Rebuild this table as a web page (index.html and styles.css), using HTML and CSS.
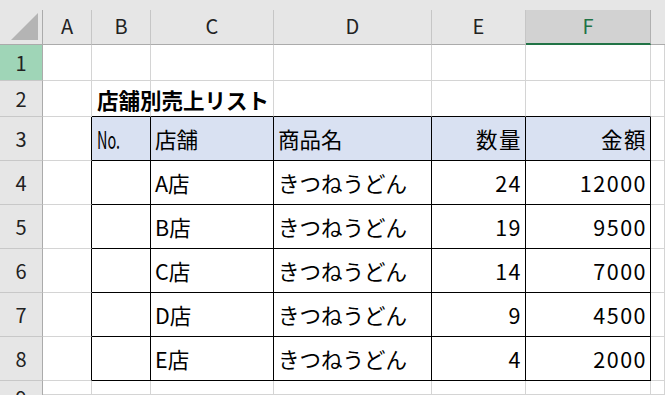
FILE: index.html
```html
<!DOCTYPE html>
<html lang="ja">
<head>
<meta charset="utf-8">
<title>店舗別売上リスト</title>
<link rel="stylesheet" href="styles.css">
</head>
<body>
<div class="sheet">
  <div class="colbar">
    <div class="hcell corner"><svg class="tri" width="28" height="28" viewBox="0 0 28 28"><polygon points="27,0 27,27 0,27" fill="#b4b4b4"/></svg></div>
    <div class="hcell">A</div>
    <div class="hcell">B</div>
    <div class="hcell">C</div>
    <div class="hcell">D</div>
    <div class="hcell">E</div>
    <div class="hcell sel">F</div>
    <div class="hcell last"></div>
  </div>
  <div class="grid">
    <!-- row 1 -->
    <div class="rh rsel">1</div>
    <div class="c"></div><div class="c"></div><div class="c"></div><div class="c"></div><div class="c"></div><div class="c"></div><div class="c"></div>
    <!-- row 2 -->
    <div class="rh">2</div>
    <div class="c"></div>
    <div class="c title tb">店舗別売上リスト</div>
    <div class="c tb"></div><div class="c tb"></div><div class="c tb"></div><div class="c tb"></div>
    <div class="c"></div>
    <!-- row 3 -->
    <div class="rh">3</div>
    <div class="c tl"></div>
    <div class="c t th"><span class="no">No.</span></div>
    <div class="c t th">店舗</div>
    <div class="c t th">商品名</div>
    <div class="c t th num">数量</div>
    <div class="c t th num">金額</div>
    <div class="c"></div>
    <!-- row 4 -->
    <div class="rh">4</div>
    <div class="c tl"></div>
    <div class="c t"></div>
    <div class="c t">A店</div>
    <div class="c t">きつねうどん</div>
    <div class="c t num">24</div>
    <div class="c t num">12000</div>
    <div class="c"></div>
    <!-- row 5 -->
    <div class="rh">5</div>
    <div class="c tl"></div>
    <div class="c t"></div>
    <div class="c t">B店</div>
    <div class="c t">きつねうどん</div>
    <div class="c t num">19</div>
    <div class="c t num">9500</div>
    <div class="c"></div>
    <!-- row 6 -->
    <div class="rh">6</div>
    <div class="c tl"></div>
    <div class="c t"></div>
    <div class="c t">C店</div>
    <div class="c t">きつねうどん</div>
    <div class="c t num">14</div>
    <div class="c t num">7000</div>
    <div class="c"></div>
    <!-- row 7 -->
    <div class="rh">7</div>
    <div class="c tl"></div>
    <div class="c t"></div>
    <div class="c t">D店</div>
    <div class="c t">きつねうどん</div>
    <div class="c t num">9</div>
    <div class="c t num">4500</div>
    <div class="c"></div>
    <!-- row 8 -->
    <div class="rh">8</div>
    <div class="c tl"></div>
    <div class="c t"></div>
    <div class="c t">E店</div>
    <div class="c t">きつねうどん</div>
    <div class="c t num">4</div>
    <div class="c t num">2000</div>
    <div class="c"></div>
    <!-- row 9 -->
    <div class="rh r9"><span class="r9n">9</span></div>
    <div class="c"></div><div class="c"></div><div class="c"></div><div class="c"></div><div class="c"></div><div class="c"></div><div class="c"></div>
  </div>
</div>
</body>
</html>
```

FILE: styles.css
```css
* { box-sizing: border-box; }
html, body { margin: 0; padding: 0; background: #ffffff; }
body {
  width: 665px;
  height: 395px;
  overflow: hidden;
  font-family: "Noto Sans CJK JP", "Noto Sans", sans-serif;
  color: #000;
}
.sheet { width: 665px; height: 395px; overflow: hidden; }

.colbar {
  display: grid;
  grid-template-columns: 43px 49px 59px 123px 158px 94px 125px 14px;
  padding-top: 10px;
  background: #e6e6e6;
  height: 45px;
}
.hcell {
  height: 35px;
  border-right: 1px solid #c6c6c6;
  border-bottom: 1px solid #ababab;
  display: flex;
  align-items: center;
  justify-content: center;
  font-size: 20px;
  color: #222;
  line-height: 1;
  padding-bottom: 2px;
}
.hcell.corner {
  border-right: 1px solid #ababab;
  justify-content: flex-end;
  align-items: flex-end;
  padding: 0 3px 3px 0;
}
.tri { display: block; }
.hcell.sel {
  background: #d2d2d2;
  color: #217346;
  border-right: 1px solid #b0b0b0;
  border-bottom: 2px solid #217346;
}
.hcell.last { border-right: none; }

.grid {
  display: grid;
  grid-template-columns: 43px 49px 59px 123px 158px 94px 125px 14px;
  grid-template-rows: 36px 36px repeat(6, 44px) 14px;
}
.rh {
  background: #e6e6e6;
  border-right: 1px solid #ababab;
  border-bottom: 1px solid #c8c8c8;
  display: flex;
  align-items: center;
  justify-content: center;
  font-size: 20px;
  color: #222;
  line-height: 1;
}
.rh.rsel { background: #9fd5b7; color: #222; }
.rh.r9 {
  align-items: flex-start;
  overflow: hidden;
  border-bottom: none;
}
.r9n { margin-top: 7px; }

.c {
  border-right: 1px solid #d4d4d4;
  border-bottom: 1px solid #d4d4d4;
  font-size: 21.5px;
  line-height: 1;
  display: flex;
  align-items: center;
  padding: 0 4px 0 4px;
  white-space: nowrap;
}
.c.title {
  font-weight: 700;
  padding-left: 5px;
  padding-top: 2px;
}
.c.tb { border-bottom-color: #000; }
.c.tl { border-right-color: #000; }
.c.t {
  border-right-color: #000;
  border-bottom-color: #000;
}
.c.th { background: #d9e1f2; }
.c.num { justify-content: flex-end; padding-right: 3px; letter-spacing: 1.5px; }
.no {
  display: inline-block;
  font-size: 24px;
  color: #000;
  transform: scaleX(0.6);
  transform-origin: left center;
  letter-spacing: 0;
  margin-left: 1px;
}
```
